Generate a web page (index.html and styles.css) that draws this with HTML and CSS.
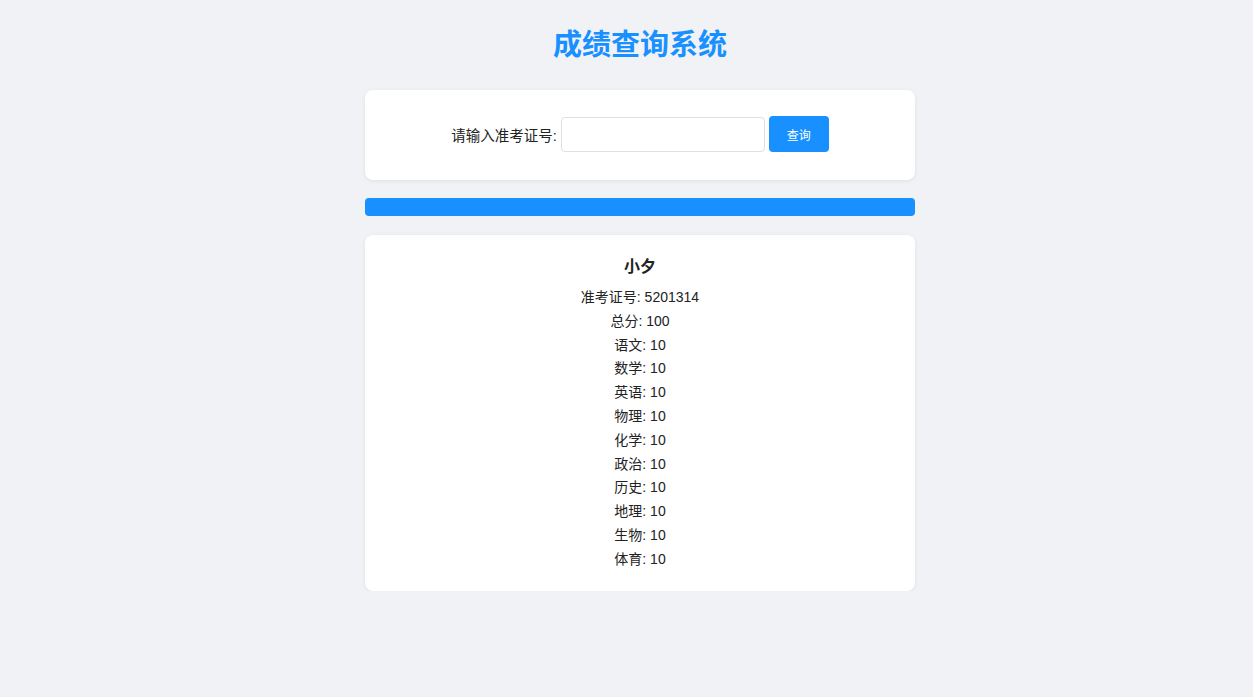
FILE: index.html
```html
<!DOCTYPE html>
<html lang="zh-CN">
<head>
<meta charset="utf-8">
<title>成绩查询系统</title>
<link rel="stylesheet" href="styles.css">
</head>
<body>
<div class="page">
  <h1 class="title">成绩查询系统</h1>
  <div class="card search-card">
    <label class="search-label" for="ticket">请输入准考证号:</label>
    <input class="search-input" id="ticket" type="text">
    <button class="search-btn" type="button">查询</button>
  </div>
  <div class="message-bar"></div>
  <div class="card result-card">
    <h3 class="student-name">小夕</h3>
    <p class="row">准考证号: 5201314</p>
    <p class="row">总分: 100</p>
    <p class="row">语文: 10</p>
    <p class="row">数学: 10</p>
    <p class="row">英语: 10</p>
    <p class="row">物理: 10</p>
    <p class="row">化学: 10</p>
    <p class="row">政治: 10</p>
    <p class="row">历史: 10</p>
    <p class="row">地理: 10</p>
    <p class="row">生物: 10</p>
    <p class="row">体育: 10</p>
  </div>
</div>
</body>
</html>
```

FILE: styles.css
```css
* { box-sizing: border-box; }

html, body {
  margin: 0;
  background: #f0f2f5;
}

body {
  padding: 0 0 0 27px;
  font-family: "Liberation Sans", "Noto Sans CJK SC", sans-serif;
  color: #222;
}

.page {
  width: 550px;
  margin: 0 auto;
  padding-top: 27px;
  display: flex;
  flex-direction: column;
}

.title {
  margin: 0 0 27px;
  text-align: center;
  font-size: 29px;
  line-height: 36px;
  font-weight: 700;
  color: #1890ff;
}

.card {
  background: #fff;
  border-radius: 8px;
  box-shadow: 0 1px 4px rgba(0, 0, 0, 0.08);
}

.search-card {
  height: 90px;
  display: flex;
  align-items: center;
  justify-content: center;
  padding: 0 0 2px 0;
}

.search-label {
  font-size: 14.5px;
  margin-right: 4px;
}

.search-input {
  width: 204px;
  height: 35px;
  border: 1px solid #dcdfe6;
  border-radius: 4px;
  padding: 0 8px;
  font-size: 14px;
  outline: none;
}

.search-btn {
  width: 60px;
  height: 36px;
  margin-left: 4px;
  border: none;
  border-radius: 4px;
  background: #1890ff;
  color: #fff;
  font-family: "Liberation Sans", "Noto Sans CJK SC", sans-serif;
  font-size: 12px;
}

.message-bar {
  height: 18px;
  margin-top: 18px;
  background: #1890ff;
  border-radius: 4px;
}

.result-card {
  margin-top: 19px;
  padding: 20px 20px 19px;
  text-align: center;
}

.student-name {
  margin: 0 0 7px;
  font-size: 16px;
  line-height: 24px;
  font-weight: 700;
}

.row {
  margin: 0;
  font-size: 14px;
  line-height: 23.8px;
}
```
